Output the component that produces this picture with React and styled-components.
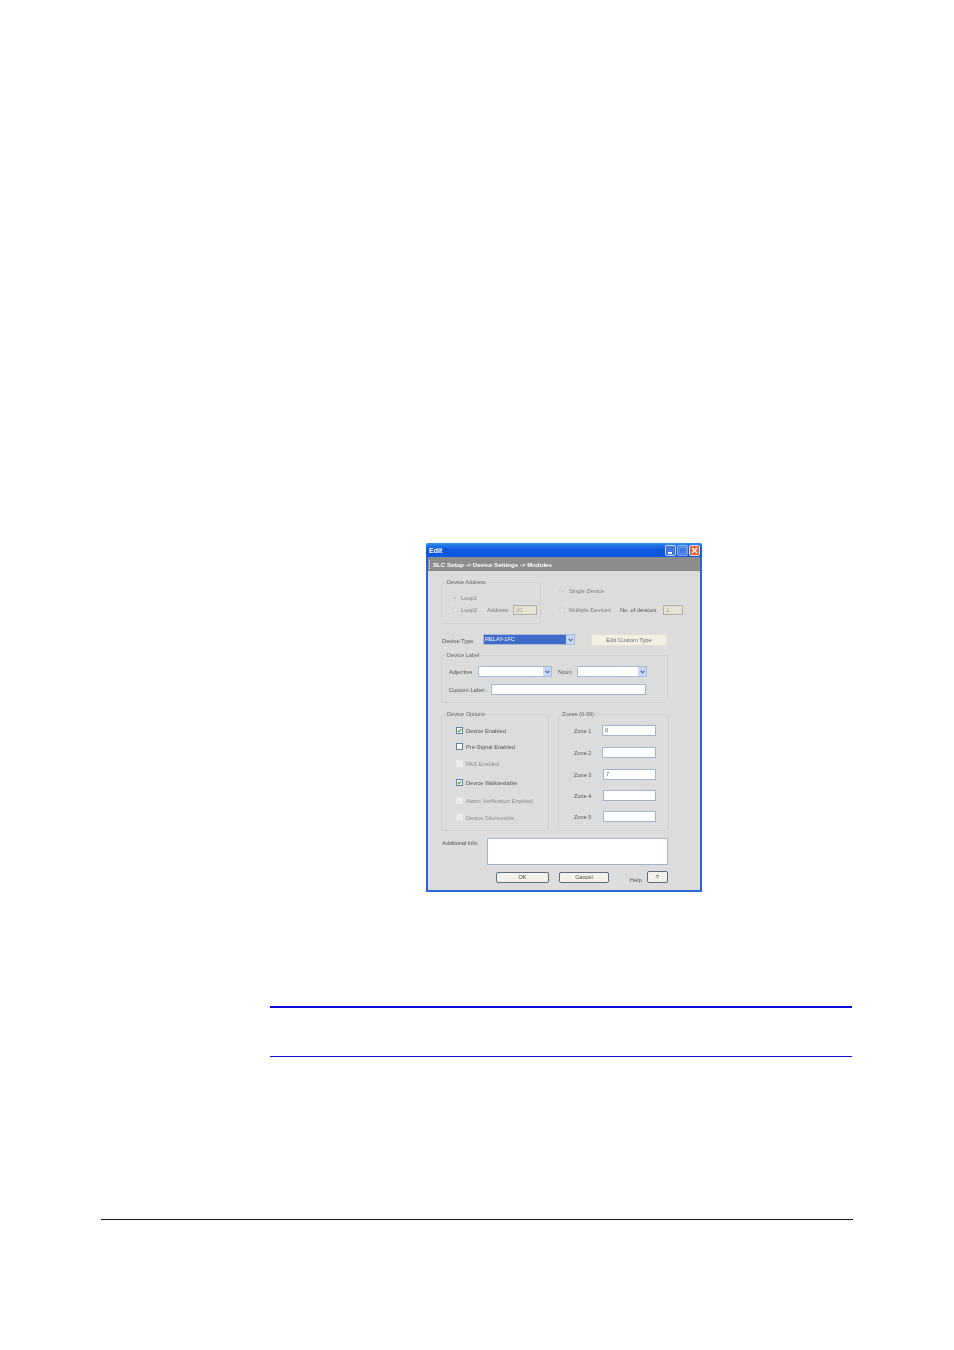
import styled, { createGlobalStyle } from 'styled-components'

const GlobalStyle = createGlobalStyle`
  html, body {
    margin: 0;
    padding: 0;
    background: #fff;
  }
`

const CheckMark = () => (
  <svg width="5" height="5" viewBox="0 0 6 6">
    <path d="M1 3 L2.4 4.6 L5 1.2" fill="none" stroke="#3f9c3a" strokeWidth="1.4" />
  </svg>
)

const Chevron = () => (
  <svg width="5" height="4" viewBox="0 0 5 4">
    <path d="M0.6 0.8 L2.5 2.8 L4.4 0.8" fill="none" stroke="#3c5c9c" strokeWidth="1.1" />
  </svg>
)

function Combo({ width, selected, children }) {
  return (
    <ComboBox $width={width}>
      <ComboValue $selected={selected}>{children}</ComboValue>
      <ComboArrow>
        <Chevron />
      </ComboArrow>
    </ComboBox>
  )
}

function Option({ label, checked, disabled, gap }) {
  return (
    <OptionRow $gap={gap}>
      <CheckBox $disabled={disabled}>{checked && <CheckMark />}</CheckBox>
      <OptionLabel $disabled={disabled}>{label}</OptionLabel>
    </OptionRow>
  )
}

const zones = [
  { name: 'Zone 1', value: '0', indent: 0, gap: 11 },
  { name: 'Zone 2', value: '', indent: 0, gap: 11 },
  { name: 'Zone 3', value: '7', indent: 1, gap: 10 },
  { name: 'Zone 4', value: '', indent: 1, gap: 10 },
  { name: 'Zone 5', value: '', indent: 1, gap: 0 },
]

export default function App() {
  return (
    <Page>
      <GlobalStyle />
      <Dialog>
        <TitleBar>
          <TitleText>Edit</TitleText>
          <WindowButtons>
            <WinButton>
              <MinGlyph />
            </WinButton>
            <WinButton $faded>
              <MaxGlyph />
            </WinButton>
            <CloseButton>
              <svg width="7" height="7" viewBox="0 0 7 7">
                <path d="M1 1 L6 6 M6 1 L1 6" stroke="#fff" strokeWidth="1.4" />
              </svg>
            </CloseButton>
          </WindowButtons>
        </TitleBar>
        <Breadcrumb>
          <Grip />
          SLC Setup -&gt; Device Settings -&gt; Modules
        </Breadcrumb>
        <Body>
          <AddressRow>
            <AddressGroup>
              <Legend>Device Address</Legend>
              <GroupBody $top={8} $left={10}>
                <LoopRow>
                  <Radio $dot />
                  <Faded>Loop1</Faded>
                </LoopRow>
                <LoopRow $top={2}>
                  <Radio />
                  <Faded>Loop2</Faded>
                  <AddressLabel>Address</AddressLabel>
                  <DisabledInput $width={24}>20</DisabledInput>
                </LoopRow>
              </GroupBody>
            </AddressGroup>
            <DeviceCount>
              <LoopRow>
                <Radio $dot />
                <SideLabel>Single Device</SideLabel>
              </LoopRow>
              <LoopRow $top={9}>
                <Radio />
                <SideLabel>Multiple Devices</SideLabel>
                <CountLabel>No. of devices</CountLabel>
                <DisabledInput $width={20}>1</DisabledInput>
              </LoopRow>
            </DeviceCount>
          </AddressRow>

          <TypeRow>
            <TypeLabel>Device Type</TypeLabel>
            <Combo width={92} selected>
              RELAY-1FC
            </Combo>
            <CustomTypeButton>Edit Custom Type</CustomTypeButton>
          </TypeRow>

          <LabelGroup>
            <Legend>Device Label</Legend>
            <GroupBody $top={8} $left={7}>
              <AdjectiveRow>
                <Label $width={24}>Adjective</Label>
                <Combo width={74} />
                <NounLabel $width={14}>Noun</NounLabel>
                <Combo width={70} />
              </AdjectiveRow>
              <CustomRow>
                <Label $width={36}>Custom Label :</Label>
                <TextInput $width={155} />
              </CustomRow>
            </GroupBody>
          </LabelGroup>

          <OptionsRow>
            <OptionsGroup>
              <Legend>Device Options</Legend>
              <GroupBody $top={10} $left={14}>
                <Option label="Device Enabled" checked gap={9} />
                <Option label="Pre-Signal Enabled" gap={10} />
                <Option label="PAS Enabled" disabled gap={12} />
                <Option label="Device Walktestable" checked gap={11} />
                <Option label="Alarm Verification Enabled" disabled gap={10} />
                <Option label="Device Silenceable" disabled gap={0} />
              </GroupBody>
            </OptionsGroup>
            <ZonesGroup>
              <Legend $inset={2}>Zones (0-99)</Legend>
              <GroupBody $top={8} $left={15}>
                {zones.map((zone) => (
                  <ZoneRow key={zone.name} $gap={zone.gap} $indent={zone.indent}>
                    <ZoneLabel>{zone.name}</ZoneLabel>
                    <TextInput $width={zone.indent ? 53 : 54}>{zone.value}</TextInput>
                  </ZoneRow>
                ))}
              </GroupBody>
            </ZonesGroup>
          </OptionsRow>

          <InfoRow>
            <InfoLabel>Additional Info:</InfoLabel>
            <InfoBox />
          </InfoRow>

          <ButtonRow>
            <PushButton $width={53}>OK</PushButton>
            <PushButton $width={50}>Cancel</PushButton>
            <HelpLabel>Help</HelpLabel>
            <HelpButton>?</HelpButton>
          </ButtonRow>
        </Body>
      </Dialog>
      <NoteRules />
      <FooterRule />
    </Page>
  )
}

const Page = styled.div`
  width: 954px;
  height: 1350px;
  padding-top: 543px;
  box-sizing: border-box;
  background: #fff;
  font-family: 'Liberation Sans', Arial, sans-serif;
  overflow: hidden;
`

const Dialog = styled.div`
  width: 276px;
  height: 349px;
  margin-left: 426px;
  box-sizing: border-box;
  border: 2px solid #2a66d4;
  border-top: 0;
  border-radius: 3px 3px 0 0;
  background: #dcdcdc;
  filter: blur(0.35px);
`

const TitleBar = styled.div`
  height: 14px;
  margin: 0 -2px;
  padding: 0 2px 0 3px;
  display: flex;
  align-items: center;
  justify-content: space-between;
  background: linear-gradient(#2f8cf0, #0f57dc 45%, #0d5ae4);
  border-radius: 3px 3px 0 0;
`

const TitleText = styled.span`
  color: #fff;
  font-size: 7px;
  font-weight: bold;
`

const WindowButtons = styled.div`
  display: flex;
  gap: 1px;
`

const WinButton = styled.div`
  width: 11px;
  height: 11px;
  position: relative;
  box-sizing: border-box;
  border: 1px solid #c8dcf8;
  border-radius: 2px;
  background: ${(p) => (p.$faded ? '#5c8ce8' : '#3f74e4')};
  opacity: ${(p) => (p.$faded ? 0.65 : 1)};
`

const MinGlyph = styled.div`
  position: absolute;
  left: 2px;
  bottom: 1px;
  width: 4px;
  height: 2px;
  background: #fff;
`

const MaxGlyph = styled.div`
  position: absolute;
  inset: 1px;
  border: 1px solid #8fb0ee;
`

const CloseButton = styled.div`
  width: 11px;
  height: 11px;
  display: flex;
  align-items: center;
  justify-content: center;
  box-sizing: border-box;
  border: 1px solid #f0d8d0;
  border-radius: 2px;
  background: #e0643c;
`

const Breadcrumb = styled.div`
  height: 14px;
  display: flex;
  align-items: center;
  gap: 2px;
  padding-left: 1px;
  background: #8c8c8c;
  color: #fff;
  font-size: 6.1px;
  font-weight: bold;
`

const Grip = styled.span`
  width: 1px;
  height: 9px;
  border-left: 1px dotted #e8e8e8;
`

const Body = styled.div`
  padding: 8px 0 0 13px;
`

const AddressRow = styled.div`
  display: flex;
`

const Group = styled.fieldset`
  margin: 0;
  padding: 0;
  box-sizing: border-box;
  border: 1px solid #d2d2d2;
  border-radius: 3px;
`

const GroupBody = styled.div`
  padding: ${(p) => p.$top}px 0 0 ${(p) => p.$left}px;
`

const Legend = styled.legend`
  padding: 0 1px;
  margin-left: ${(p) => p.$inset ?? 4}px;
  font-size: 5.6px;
  line-height: 6px;
  color: #666;
`

const AddressGroup = styled(Group)`
  width: 100px;
  height: 45px;
`

const LoopRow = styled.div`
  display: flex;
  align-items: center;
  gap: 3px;
  height: 10px;
  margin-top: ${(p) => p.$top || 0}px;
`

const Radio = styled.span`
  width: 6px;
  height: 6px;
  flex: none;
  display: flex;
  align-items: center;
  justify-content: center;
  box-sizing: border-box;
  border: 1px solid #d4d4d4;
  border-radius: 50%;
  background: #e4e4e4;
  &::after {
    content: '';
    display: ${(p) => (p.$dot ? 'block' : 'none')};
    width: 2px;
    height: 2px;
    border-radius: 50%;
    background: #b4b4b4;
  }
`

const Faded = styled.span`
  font-size: 5.75px;
  color: #7c7c7c;
  white-space: nowrap;
`

const SideLabel = styled(Faded)`
  margin-left: 1px;
`

const AddressLabel = styled(Faded)`
  margin-left: 7px;
  margin-right: 2px;
`

const DisabledInput = styled.span`
  width: ${(p) => p.$width}px;
  height: 10px;
  flex: none;
  box-sizing: border-box;
  padding-left: 2px;
  border: 1px solid #b0b0a4;
  background: #e6e2d4;
  color: #a8a898;
  font-size: 5.6px;
  line-height: 8px;
`

const DeviceCount = styled.div`
  margin: 7px 0 0 18px;
`

const CountLabel = styled.span`
  margin: 0 4px 0 6px;
  font-size: 5.75px;
  color: #555;
  white-space: nowrap;
`

const TypeRow = styled.div`
  margin-top: 10px;
  display: flex;
  align-items: flex-start;
`

const Label = styled.span`
  width: ${(p) => (p.$width ? `${p.$width}px` : 'auto')};
  flex: none;
  font-size: 5.75px;
  color: #555;
  white-space: nowrap;
`

const TypeLabel = styled(Label)`
  width: 32px;
  margin: 4px 4px 0 1px;
`

const ComboBox = styled.div`
  width: ${(p) => p.$width}px;
  height: 11px;
  flex: none;
  margin-left: 5px;
  display: flex;
  box-sizing: border-box;
  border: 1px solid #a8bcd8;
  background: #fff;
`

const ComboValue = styled.div`
  flex: 1;
  padding-left: 1px;
  font-size: 5.6px;
  line-height: 9px;
  color: #fff;
  background: ${(p) => (p.$selected ? '#3f6cc8' : '#fff')};
`

const ComboArrow = styled.div`
  width: 8px;
  display: flex;
  align-items: center;
  justify-content: center;
  background: #c8d8f4;
`

const CustomTypeButton = styled.div`
  width: 76px;
  height: 12px;
  margin-left: 16px;
  box-sizing: border-box;
  border: 1px solid #e4e0cc;
  border-radius: 2px;
  background: #f2f0e2;
  color: #666;
  font-size: 5.75px;
  line-height: 10px;
  text-align: center;
`

const LabelGroup = styled(Group)`
  width: 227px;
  height: 51px;
  margin-top: 6px;
`

const AdjectiveRow = styled.div`
  display: flex;
  align-items: center;
`

const NounLabel = styled(Label)`
  margin-left: 6px;
`

const CustomRow = styled.div`
  display: flex;
  align-items: center;
  gap: 6px;
  padding-top: 7px;
`

const TextInput = styled.div`
  width: ${(p) => p.$width}px;
  height: 11px;
  flex: none;
  box-sizing: border-box;
  padding-left: 2px;
  border: 1px solid #a4b4c8;
  background: #fff;
  color: #555;
  font-size: 5.6px;
  line-height: 9px;
`

const OptionsRow = styled.div`
  margin-top: 8px;
  display: flex;
  gap: 9px;
`

const OptionsGroup = styled(Group)`
  width: 108px;
  height: 120px;
`

const OptionRow = styled.div`
  display: flex;
  align-items: center;
  gap: 3px;
  height: 7px;
  margin-bottom: ${(p) => p.$gap}px;
`

const CheckBox = styled.span`
  width: 7px;
  height: 7px;
  flex: none;
  display: flex;
  align-items: center;
  justify-content: center;
  box-sizing: border-box;
  border: 1px solid ${(p) => (p.$disabled ? '#e8e8e8' : '#64809c')};
  background: ${(p) => (p.$disabled ? '#ececec' : '#fff')};
`

const OptionLabel = styled.span`
  font-size: 5.7px;
  color: ${(p) => (p.$disabled ? '#8c8c8c' : '#555')};
  white-space: nowrap;
`

const ZonesGroup = styled(Group)`
  width: 111px;
  height: 120px;
`

const ZoneRow = styled.div`
  display: flex;
  align-items: center;
  gap: ${(p) => (p.$indent ? 11 : 10)}px;
  margin-bottom: ${(p) => p.$gap}px;
`

const ZoneLabel = styled.span`
  width: 18px;
  font-size: 5.6px;
  color: #555;
  white-space: nowrap;
`

const InfoRow = styled.div`
  margin-top: 7px;
  display: flex;
  gap: 9px;
`

const InfoLabel = styled(Label)`
  width: 36px;
  margin: 2px 0 0 1px;
  font-size: 5.5px;
`

const InfoBox = styled.div`
  width: 181px;
  height: 27px;
  box-sizing: border-box;
  border: 1px solid #a4b4c8;
  background: #fff;
`

const ButtonRow = styled.div`
  margin: 7px 0 0 55px;
  display: flex;
  align-items: flex-start;
`

const PushButton = styled.div`
  width: ${(p) => p.$width}px;
  height: 11px;
  margin-right: 10px;
  box-sizing: border-box;
  border: 1px solid #5c6c84;
  border-radius: 2px;
  background: #f2f2ea;
  color: #444;
  font-size: 5.6px;
  line-height: 9px;
  text-align: center;
`

const HelpLabel = styled(Label)`
  margin: 5px 5px 0 11px;
`

const HelpButton = styled(PushButton)`
  width: 21px;
  height: 12px;
  margin: -1px 0 0 0;
  line-height: 10px;
`

const NoteRules = styled.div`
  width: 582px;
  height: 48px;
  margin: 114px 0 0 270px;
  border-top: 2px solid #0a0ae0;
  border-bottom: 1px solid #1414d0;
`

const FooterRule = styled.div`
  width: 752px;
  height: 1px;
  margin: 162px 0 0 101px;
  background: #111;
`
